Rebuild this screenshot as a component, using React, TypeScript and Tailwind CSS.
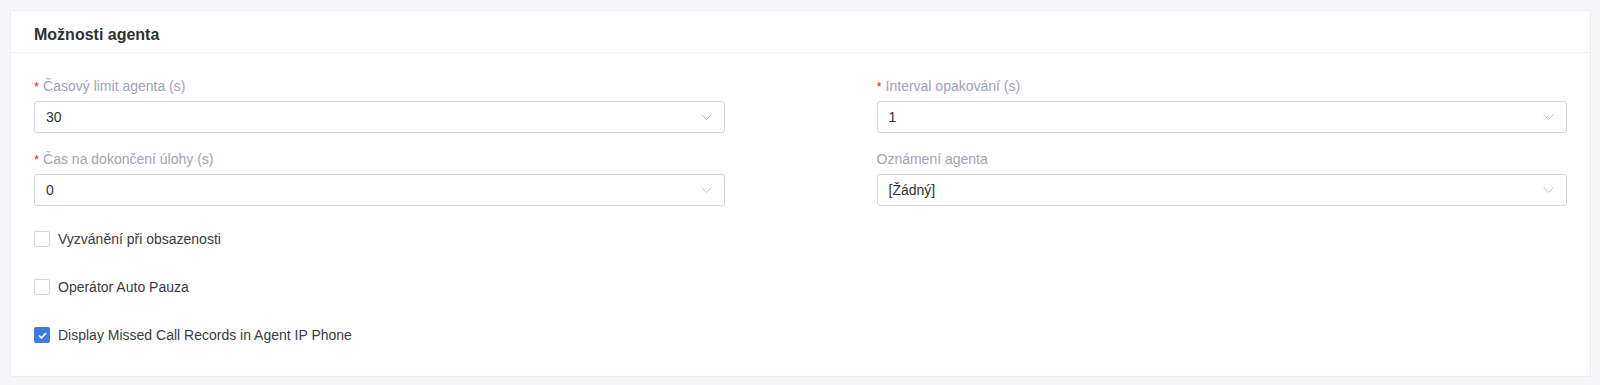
import React from "react";

const Chevron = () => (
  <svg width="11" height="6" viewBox="0 0 11 6" fill="none" className="shrink-0">
    <path d="M0.5 0.5L5.5 5.5L10.5 0.5" stroke="#c4c4ce" strokeWidth="1" />
  </svg>
);

const Field = ({ label, value, required }: { label: string; value: string; required?: boolean }) => (
  <div className="flex flex-col">
    <div className="flex items-center h-[20px] text-[14px] text-[#a3a3b5] leading-none">
      {required && <span className="text-[#e5262b] mr-[4px] text-[13px]">*</span>}
      <span>{label}</span>
    </div>
    <div className="mt-[5px] h-[32px] border border-[#d5d5df] rounded-[3px] flex items-center justify-between pl-[11px] pr-[12px] text-[14px] text-[#303133] bg-white">
      <span>{value}</span>
      <Chevron />
    </div>
  </div>
);

const Check = ({ label, checked }: { label: string; checked?: boolean }) => (
  <div className="flex items-center h-[16px] text-[14px] text-[#3a3a44]">
    {checked ? (
      <span className="w-[16px] h-[16px] rounded-[2px] bg-[#3b7ddd] flex items-center justify-center">
        <svg width="9" height="7" viewBox="0 0 9 7" fill="none">
          <path d="M1 3.5L3.4 5.8L8 1.2" stroke="white" strokeWidth="1.7" />
        </svg>
      </span>
    ) : (
      <span className="w-[16px] h-[16px] rounded-[2px] border border-[#d5d5df] bg-white" />
    )}
    <span className="ml-[8px]">{label}</span>
  </div>
);

export default function App() {
  return (
    <div className="w-[1600px] h-[385px] bg-[#f7f7f9] pt-[10px] pl-[10px] pr-[9px]" style={{ fontFamily: '"Liberation Sans", Arial, sans-serif' }}>
      <div className="bg-white border border-[#ededf1] rounded-[2px] h-[367px]">
        <div className="h-[42px] border-b border-[#efeff3] flex items-center pl-[23px] pt-[6px] text-[16px] font-bold text-[#303133]">
          Možnosti agenta
        </div>
        <div className="pl-[23px] pr-[23px] pt-[23px]">
          <div className="grid grid-cols-2 gap-x-[152px] gap-y-[16px]">
            <Field label="Časový limit agenta (s)" value="30" required />
            <Field label="Interval opakování (s)" value="1" required />
            <Field label="Čas na dokončení úlohy (s)" value="0" required />
            <Field label="Oznámení agenta" value="[Žádný]" />
          </div>
          <div className="flex flex-col gap-[32px] mt-[25px]">
            <Check label="Vyzvánění při obsazenosti" />
            <Check label="Operátor Auto Pauza" />
            <Check label="Display Missed Call Records in Agent IP Phone" checked />
          </div>
        </div>
      </div>
    </div>
  );
}
